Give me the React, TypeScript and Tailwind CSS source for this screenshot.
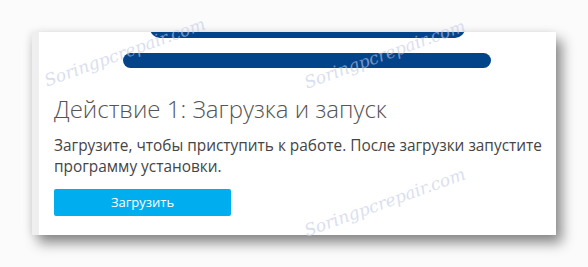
import React from "react";

const marks = [
  { x: 40, y: 40 },
  { x: 300, y: 42 },
  { x: 300, y: 190 },
];

export default function App() {
  return (
    <div className="w-[588px] h-[267px] bg-[#fbfbfb] pt-[32px] pl-[32px] relative overflow-hidden" style={{ fontFamily: "'Open Sans', 'Noto Sans', sans-serif" }}>
      <div className="w-[524px] h-[203px] flex bg-white shadow-[6px_8px_12px_rgba(0,0,0,0.45),-2px_0_8px_rgba(0,0,0,0.08)]">
        <div className="w-[7px] bg-[#efefef]" />
        <div className="flex-1 overflow-hidden flex flex-col">
          <div className="ml-[111px] w-[315px] h-[20px] -mt-[14px] rounded-full bg-[#03438a] shrink-0" />
          <div className="ml-[84px] w-[368px] h-[15px] mt-[15px] rounded-full bg-[#03438a] shrink-0" />
          <div className="pl-[15px]">
            <h1 className="mt-[25px] text-[24px] leading-[32px] font-light text-[#555555]">
              Действие 1: Загрузка и запуск
            </h1>
            <p className="mt-[10px] text-[15.4px] leading-[21px] text-[#454545] whitespace-nowrap">
              Загрузите, чтобы приступить к работе. После загрузки запустите
              <br />
              программу установки.
            </p>
            <button className="mt-[12px] w-[177px] h-[27px] rounded-[2px] bg-[#00adef] text-white text-[13px] leading-[27px] text-center">
              Загрузить
            </button>
          </div>
        </div>
      </div>
      {marks.map((m, i) => (
        <div
          key={i}
          className="absolute text-[17px] italic text-[#c3cbe6] opacity-60 -rotate-[20deg] pointer-events-none whitespace-nowrap"
          style={{ left: m.x, top: m.y, fontFamily: "'DejaVu Serif', serif" }}
        >
          Soringpcrepair.com
        </div>
      ))}
    </div>
  );
}
